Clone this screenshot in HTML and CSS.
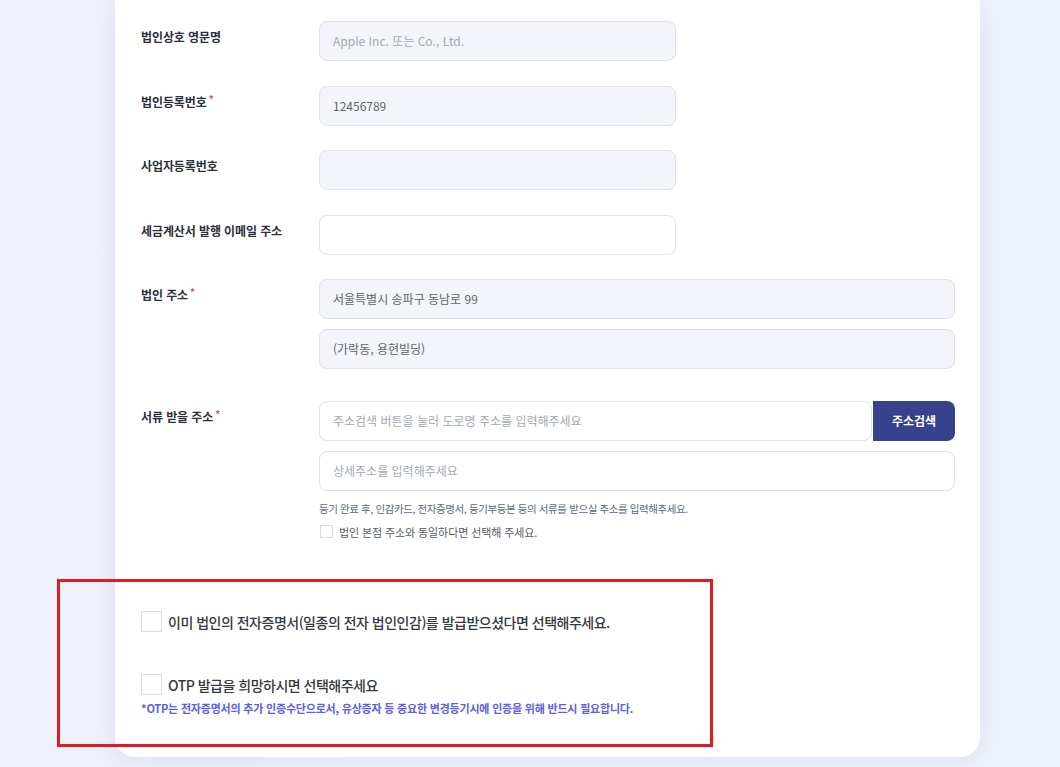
FILE: index.html
```html
<!DOCTYPE html>
<html lang="ko">
<head>
<meta charset="utf-8">
<link rel="stylesheet" href="styles.css">
</head>
<body>
<div class="page">
  <div class="card">
    <div class="form">
      <div class="row">
        <div class="label">법인상호 영문명</div>
        <div class="field short"><div class="input filled placeholder">Apple Inc. 또는 Co., Ltd.</div></div>
      </div>
      <div class="row">
        <div class="label">법인등록번호<span class="req">*</span></div>
        <div class="field short"><div class="input filled">12456789</div></div>
      </div>
      <div class="row">
        <div class="label">사업자등록번호</div>
        <div class="field short"><div class="input filled"></div></div>
      </div>
      <div class="row">
        <div class="label">세금계산서 발행 이메일 주소</div>
        <div class="field short"><div class="input"></div></div>
      </div>
      <div class="row addr">
        <div class="label">법인 주소<span class="req">*</span></div>
        <div class="field stack">
          <div class="input filled">서울특별시 송파구 동남로 99</div>
          <div class="input filled">(가락동, 용현빌딩)</div>
        </div>
      </div>
      <div class="row">
        <div class="label">서류 받을 주소<span class="req">*</span></div>
        <div class="field stack">
          <div class="search">
            <div class="input placeholder grow">주소검색 버튼을 눌러 도로명 주소를 입력해주세요</div>
            <div class="btn">주소검색</div>
          </div>
          <div class="input placeholder">상세주소를 입력해주세요</div>
          <div class="help">등기 완료 후, 인감카드, 전자증명서, 등기부등본 등의 서류를 받으실 주소를 입력해주세요.</div>
          <label class="small-check"><span class="box-s"></span>법인 본점 주소와 동일하다면 선택해 주세요.</label>
        </div>
      </div>
    </div>
    <div class="options">
      <label class="big-check"><span class="box-l"></span>이미 법인의 전자증명서(일종의 전자 법인인감)를 발급받으셨다면 선택해주세요.</label>
      <div class="otp">
        <label class="big-check"><span class="box-l"></span>OTP 발급을 희망하시면 선택해주세요</label>
        <div class="note">*OTP는 전자증명서의 추가 인증수단으로서, 유상증자 등 중요한 변경등기시에 인증을 위해 반드시 필요합니다.</div>
      </div>
    </div>
  </div>
</div>
<div class="highlight"></div>
</body>
</html>
```
FILE: styles.css
```css
* { box-sizing: border-box; }
html, body { margin: 0; padding: 0; }
body {
  width: 1060px;
  height: 767px;
  overflow: hidden;
  background: linear-gradient(90deg, #eef1fa 0%, #f1f4fd 60%, #eef2fc 100%);
  font-family: "Noto Sans CJK KR", "Noto Sans", sans-serif;
  color: #2b303c;
  position: relative;
}
.page { padding-left: 115px; }
.card {
  width: 865px;
  height: 757px;
  background: #fff;
  border-radius: 0 0 20px 20px;
  box-shadow: 0 4px 24px rgba(70, 90, 160, 0.12);
  padding: 21px 25px 0 26px;
  display: flex;
  flex-direction: column;
}
.form { display: flex; flex-direction: column; gap: 24.5px; }
.row { display: flex; }
.row.addr { margin-bottom: 8px; }
.label {
  width: 178px;
  flex: none;
  font-size: 12px;
  font-weight: 700;
  line-height: 20px;
  padding-top: 6px;
  color: #2a2f3b;
  letter-spacing: -0.1px;
}
.req { color: #ec4d55; font-size: 10px; margin-left: 2px; position: relative; top: -4px; }
.field { flex: 1; }
.field.short { flex: none; width: 357px; }
.stack { display: flex; flex-direction: column; gap: 9.5px; }
.input {
  height: 40px;
  border: 1px solid #dde1ec;
  border-radius: 8px;
  background: #fff;
  font-size: 12px;
  line-height: 38px;
  padding: 0 13px;
  color: #5d6371;
}
.input.filled { background: #f3f5fa; }
.placeholder { color: #a2a8b6; }
.search { display: flex; }
.grow { flex: 1; border-radius: 8px; }
.btn {
  width: 82px;
  height: 40px;
  background: #36428b;
  color: #fff;
  font-size: 12px;
  font-weight: 700;
  line-height: 40px;
  text-align: center;
  border-radius: 0 8px 8px 0;
  margin-left: 1px;
}
.help {
  font-size: 10.5px;
  color: #5a6686;
  line-height: 16px;
  margin-top: 1px;
  letter-spacing: -0.4px;
}
.small-check {
  display: flex;
  align-items: center;
  font-size: 11px;
  color: #555b66;
  line-height: 16px;
  margin-top: -3px;
  padding-left: 1px;
  letter-spacing: -0.1px;
}
.box-s {
  width: 13px; height: 13px;
  border: 1px solid #d6d8dd;
  margin-right: 6px;
  background: #fff;
}
.options {
  margin-top: 71px;
  display: flex;
  flex-direction: column;
  gap: 41px;
}
.big-check {
  display: flex;
  align-items: center;
  font-size: 14px;
  font-weight: 500;
  color: #343842;
  line-height: 22px;
  letter-spacing: -0.5px;
}
.box-l {
  width: 21px; height: 21px;
  border: 1px solid #dcdde0;
  margin-right: 6px;
  background: #fff;
  flex: none;
}
.note {
  font-size: 11px;
  font-weight: 700;
  color: #5b5fe0;
  margin-top: 4px;
  line-height: 16px;
  letter-spacing: -0.2px;
}
.highlight {
  position: absolute;
  left: 57px;
  top: 579px;
  width: 656px;
  height: 168px;
  border: 3px solid #e21b22;
}
```
